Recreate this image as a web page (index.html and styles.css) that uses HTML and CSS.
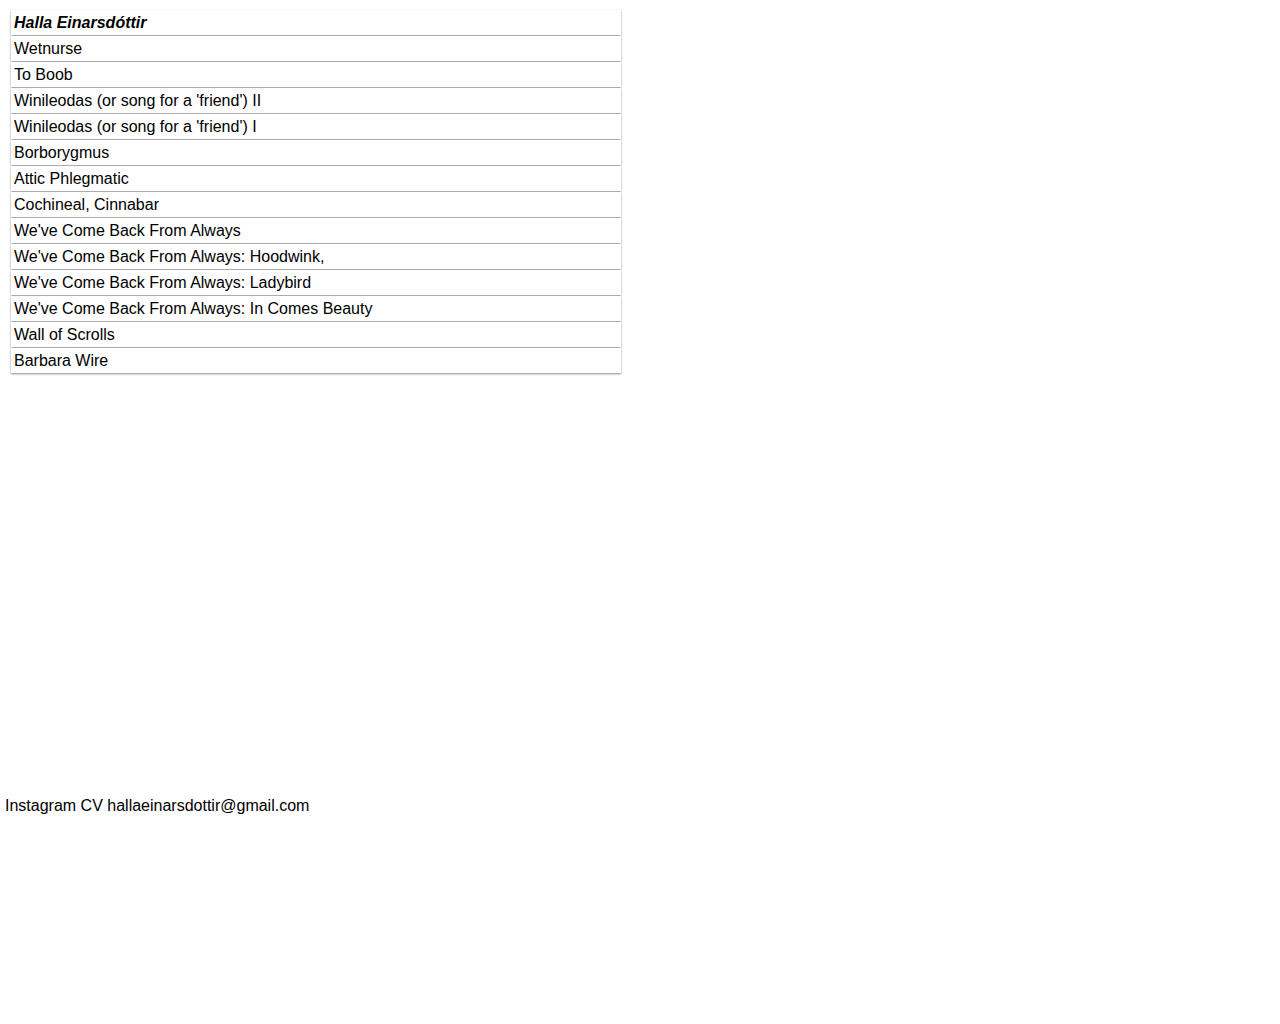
FILE: index.html
```html
<!DOCTYPE html>
<html lang="en">
<head>
  <meta charset="UTF-8" />
  <title>Halla Einarsdóttir</title>
  <link rel="stylesheet" href="styles.css">
</head>
<body>
  <!-- works list -->
  <div class="list">
    <div class="item name">Halla Einarsdóttir</div>
    <div class="item">Wetnurse</div>
    <div class="item">To Boob</div>
    <div class="item">Winileodas (or song for a 'friend') II</div>
    <div class="item">Winileodas (or song for a 'friend') I</div>
    <div class="item">Borborygmus</div>
    <div class="item">Attic Phlegmatic</div>
    <div class="item">Cochineal, Cinnabar</div>
    <div class="item">We've Come Back From Always</div>
    <div class="item">We've Come Back From Always: Hoodwink,</div>
    <div class="item">We've Come Back From Always: Ladybird</div>
    <div class="item">We've Come Back From Always: In Comes Beauty</div>
    <div class="item">Wall of Scrolls</div>
    <div class="item">Barbara Wire</div>
  </div>

  <!-- footer links -->
  <div class="footer">
    <span>Instagram</span> <span>CV</span> <span>hallaeinarsdottir@gmail.com</span>
  </div>
</body>
</html>
```

FILE: styles.css
```css
body {
  margin: 0;
  font-family: "Liberation Sans", Arial, sans-serif;
  font-size: 16px;
  color: #000;
  background: #fff;
}

.list {
  display: flex;
  flex-direction: column;
  gap: 1px;
  width: 610px;
  padding: 10px 0 0 11px;
}

.item {
  height: 25px;
  line-height: 25px;
  padding: 0 3px;
  background: #fff;
  box-shadow: 0 1px 2px rgba(0, 0, 0, 0.45);
}

.name {
  font-weight: bold;
  font-style: italic;
}

.footer {
  margin-top: 424px;
  padding-left: 5px;
  line-height: 18px;
}
```
